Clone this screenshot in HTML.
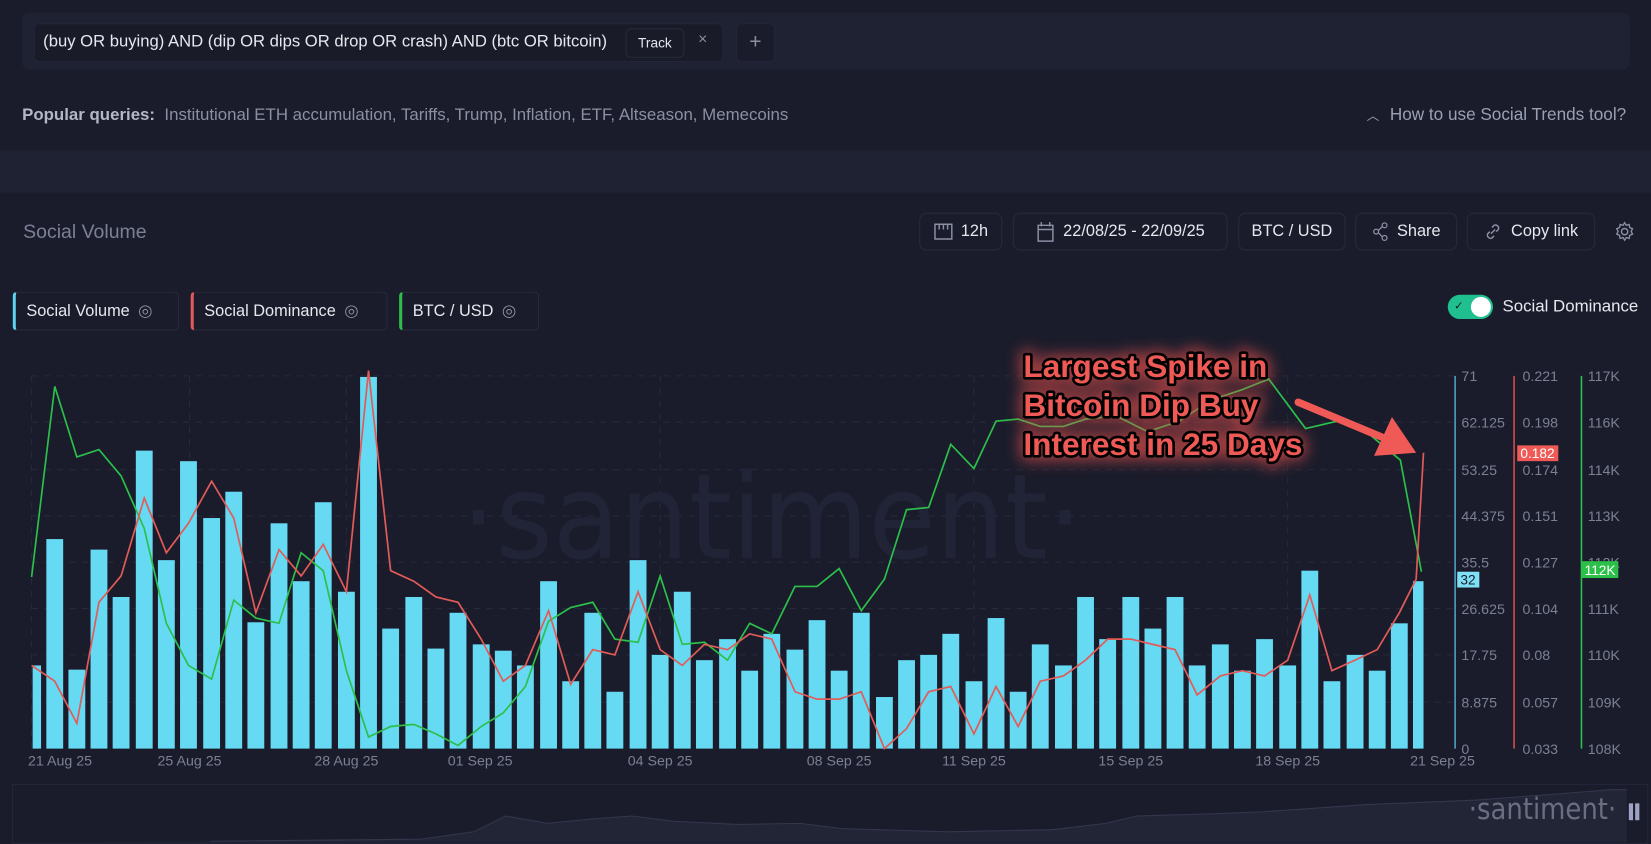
<!DOCTYPE html>
<html><head><meta charset="utf-8"><style>
html,body{margin:0;padding:0;background:#1a1c2b;overflow:hidden;width:1651px;height:844px}
#w{position:absolute;left:0;top:0;width:1568px;height:802px;transform:scale(1.0529);transform-origin:0 0;font-family:"Liberation Sans",sans-serif;color:#e2e4ec}
.a{position:absolute}
.btn{position:absolute;top:202px;height:36px;border:1px solid #262a3b;border-radius:7px;box-sizing:border-box;display:flex;align-items:center;justify-content:center;font-size:15.5px;color:#e6e8ef;gap:8px}
.leg{position:absolute;top:277px;height:37px;border:1px solid #262a3b;border-radius:4px;box-sizing:border-box;display:flex;align-items:center;padding-left:10px;font-size:15.5px;color:#e6e8ef;gap:8px}
</style></head><body><div id="w">
<div class="a" style="left:21px;top:12px;width:1527px;height:54px;background:#1f2233;border-radius:7px"></div>
<div class="a" style="left:32px;top:22px;width:655px;height:37px;background:#191b29;border:1px solid #23263a;border-radius:5px;box-sizing:border-box"></div>
<div class="a" style="left:41px;top:31px;font-size:15.8px;color:#e6e8ef;white-space:nowrap">(buy OR buying) AND (dip OR dips OR drop OR crash) AND (btc OR bitcoin)</div>
<div class="a" style="left:594px;top:27px;width:56px;height:28px;border:1px solid #262a3b;border-radius:5px;box-sizing:border-box;font-size:13px;text-align:center;line-height:26px;color:#e6e8ef">Track</div>
<div class="a" style="left:663px;top:29px;font-size:15px;color:#8a8fa3">×</div>
<div class="a" style="left:699px;top:22px;width:37px;height:37px;background:#1a1c2b;border:1px solid #23263a;border-radius:5px;box-sizing:border-box;text-align:center;line-height:34px;font-size:20px;color:#8a8fa3">+</div>
<div class="a" style="left:21px;top:101px;font-size:16px;color:#8a8fa3;white-space:nowrap"><b style="color:#b3b7c6">Popular queries:</b>&nbsp; Institutional ETH accumulation, Tariffs, Trump, Inflation, ETF, Altseason, Memecoins</div>
<div class="a" style="left:1298px;top:100px;font-size:16.3px;color:#9aa0b4;white-space:nowrap"><span style="font-size:12px;margin-right:10px">︿</span>How to use Social Trends tool?</div>
<div class="a" style="left:0;top:143px;width:1568px;height:40px;background:#1f2233"></div>
<div class="a" style="left:22px;top:209px;font-size:18.5px;color:#7b8095">Social Volume</div>
<div class="btn" style="left:873px;width:79px"><svg width="18" height="16"><path d="M1 1h16v14h-16zM5 1v5M9 1v5M13 1v5" fill="none" stroke="#8a8fa3" stroke-width="1.4"/></svg>12h</div>
<div class="btn" style="left:962px;width:204px"><svg width="18" height="20"><path d="M2 4h14v15h-14zM2 8h14M5 1v4M13 1v4" fill="none" stroke="#8a8fa3" stroke-width="1.4"/></svg>22/08/25 - 22/09/25</div>
<div class="btn" style="left:1176px;width:102px">BTC / USD</div>
<div class="btn" style="left:1287px;width:97px"><svg width="16" height="18"><circle cx="12" cy="3" r="2.3" fill="none" stroke="#8a8fa3" stroke-width="1.2"/><circle cx="4" cy="9" r="2.3" fill="none" stroke="#8a8fa3" stroke-width="1.2"/><circle cx="12" cy="15" r="2.3" fill="none" stroke="#8a8fa3" stroke-width="1.2"/><path d="M6 8l4-4M6 10l4 4" stroke="#8a8fa3" stroke-width="1.2"/></svg>Share</div>
<div class="btn" style="left:1393px;width:122px"><svg width="18" height="18"><path d="M7 11l4-4M8 5l2-2a3 3 0 014 4l-2 2M10 13l-2 2a3 3 0 01-4-4l2-2" fill="none" stroke="#8a8fa3" stroke-width="1.4"/></svg>Copy link</div>
<svg class="a" style="left:1533px;top:210px" width="20" height="20"><circle cx="10" cy="10" r="3" fill="none" stroke="#8a8fa3" stroke-width="1.4"/><path d="M10 1.5l1.5 2.5 2.8-.8.5 2.9 2.7 1.1-1.3 2.6 1.3 2.6-2.7 1.1-.5 2.9-2.8-.8-1.5 2.5-1.5-2.5-2.8.8-.5-2.9-2.7-1.1 1.3-2.6-1.3-2.6 2.7-1.1.5-2.9 2.8.8z" fill="none" stroke="#8a8fa3" stroke-width="1.3"/></svg>
<div class="leg" style="left:12px;width:158px;border-left:3px solid #5fd3f0">Social Volume <span style="color:#8a8fa3">◎</span></div>
<div class="leg" style="left:181px;width:187px;border-left:3px solid #e35b58">Social Dominance <span style="color:#8a8fa3">◎</span></div>
<div class="leg" style="left:379px;width:133px;border-left:3px solid #2cc04b">BTC / USD <span style="color:#8a8fa3">◎</span></div>
<div class="a" style="left:1375px;top:280px;width:43px;height:23px;background:#1fbf8f;border-radius:12px"><div class="a" style="left:22px;top:2px;width:19px;height:19px;background:#fff;border-radius:50%"></div><div class="a" style="left:6px;top:4px;font-size:11px;color:#13202a">✓</div></div>
<div class="a" style="left:1427px;top:283px;font-size:16px;color:#e6e8ef">Social Dominance</div>

<svg class="a" style="left:0;top:0" width="1568" height="802">
<defs><filter id="gl" x="-20%" y="-40%" width="140%" height="180%"><feGaussianBlur stdDeviation="7"/></filter></defs>
<g stroke="#262a3b" stroke-dasharray="6 6" stroke-width="1">
<path d="M30 357H1380M30 401H1380M30 446H1380M30 490H1380M30 534H1380M30 578H1380M30 622H1380M30 667H1380"/>
<path d="M30 357V711M180 357V711M329 357V711M627 357V711M925 357V711M1223 357V711"/>
</g>
<text x="733" y="530" font-size="112" fill="#212436" text-anchor="middle" font-family="DejaVu Sans" font-weight="normal" textLength="590" lengthAdjust="spacingAndGlyphs">·santiment·</text>
<g fill="#66d9f3">
<rect x="31" y="632" width="8" height="79"/><rect x="44" y="512" width="16" height="199"/><rect x="65" y="636" width="16" height="75"/><rect x="86" y="522" width="16" height="189"/><rect x="107" y="567" width="16" height="144"/><rect x="129" y="428" width="16" height="283"/><rect x="150" y="532" width="16" height="179"/><rect x="171" y="438" width="16" height="273"/><rect x="193" y="492" width="16" height="219"/><rect x="214" y="467" width="16" height="244"/><rect x="235" y="591" width="16" height="120"/><rect x="257" y="497" width="16" height="214"/><rect x="278" y="552" width="16" height="159"/><rect x="299" y="477" width="16" height="234"/><rect x="321" y="562" width="16" height="149"/><rect x="342" y="358" width="16" height="353"/><rect x="363" y="597" width="16" height="114"/><rect x="385" y="567" width="16" height="144"/><rect x="406" y="616" width="16" height="95"/><rect x="427" y="582" width="16" height="129"/><rect x="449" y="612" width="16" height="99"/><rect x="470" y="618" width="16" height="93"/><rect x="491" y="632" width="16" height="79"/><rect x="513" y="552" width="16" height="159"/><rect x="534" y="647" width="16" height="64"/><rect x="555" y="582" width="16" height="129"/><rect x="576" y="657" width="16" height="54"/><rect x="598" y="532" width="16" height="179"/><rect x="619" y="622" width="16" height="89"/><rect x="640" y="562" width="16" height="149"/><rect x="661" y="627" width="16" height="84"/><rect x="683" y="607" width="16" height="104"/><rect x="704" y="637" width="16" height="74"/><rect x="725" y="602" width="16" height="109"/><rect x="747" y="617" width="16" height="94"/><rect x="768" y="589" width="16" height="122"/><rect x="789" y="637" width="16" height="74"/><rect x="810" y="582" width="16" height="129"/><rect x="832" y="662" width="16" height="49"/><rect x="853" y="627" width="16" height="84"/><rect x="874" y="622" width="16" height="89"/><rect x="895" y="602" width="16" height="109"/><rect x="917" y="647" width="16" height="64"/><rect x="938" y="587" width="16" height="124"/><rect x="959" y="657" width="16" height="54"/><rect x="980" y="612" width="16" height="99"/><rect x="1002" y="632" width="16" height="79"/><rect x="1023" y="567" width="16" height="144"/><rect x="1044" y="607" width="16" height="104"/><rect x="1066" y="567" width="16" height="144"/><rect x="1087" y="597" width="16" height="114"/><rect x="1108" y="567" width="16" height="144"/><rect x="1129" y="632" width="16" height="79"/><rect x="1151" y="612" width="16" height="99"/><rect x="1172" y="637" width="16" height="74"/><rect x="1193" y="607" width="16" height="104"/><rect x="1215" y="632" width="16" height="79"/><rect x="1236" y="542" width="16" height="169"/><rect x="1257" y="647" width="16" height="64"/><rect x="1279" y="622" width="16" height="89"/><rect x="1300" y="637" width="16" height="74"/><rect x="1321" y="592" width="16" height="119"/><rect x="1342" y="552" width="10" height="159"/>
</g>
<polyline fill="none" stroke="#2cc04b" stroke-width="1.6" points="30,548 52,367 73,434 94,427 115,452 137,502 158,592 179,632 201,645 222,570 243,587 265,592 286,525 307,542 329,637 350,700 371,690 393,688 414,697 435,708 457,690 478,677 499,652 521,590 542,577 563,572 584,607 606,610 627,547 648,612 669,610 691,627 712,592 733,602 755,557 776,557 797,540 818,580 840,550 861,484 882,482 903,422 925,445 946,400 967,398 988,405 1010,405 1031,398 1060,395 1090,410 1120,400 1150,380 1180,370 1205,360 1240,407 1270,400 1300,412 1330,437 1350,543"/>
<polyline fill="none" stroke="#e35b58" stroke-width="1.6" points="30,632 52,647 73,687 94,572 115,547 137,473 158,525 179,497 201,457 222,492 243,582 265,522 286,547 307,517 329,562 350,352 371,542 393,552 414,567 435,572 457,607 478,647 499,632 521,580 542,650 563,617 584,622 606,562 627,617 648,632 669,612 691,617 712,602 733,607 755,657 776,664 797,664 818,657 840,711 861,692 882,657 903,652 925,697 946,652 967,690 988,647 1010,642 1031,627 1052,607 1074,607 1095,612 1116,617 1137,660 1159,642 1180,637 1201,642 1223,627 1244,565 1265,637 1287,627 1308,617 1329,582 1345,550 1352,430"/>
<g font-family="Liberation Sans" font-weight="bold" font-size="30" fill="#e3504c" stroke="#e3504c" stroke-width="10" filter="url(#gl)" opacity="0.7">
<text x="972" y="358">Largest Spike in</text><text x="972" y="395">Bitcoin Dip Buy</text><text x="972" y="432">Interest in 25 Days</text></g>
<g font-family="Liberation Sans" font-weight="bold" font-size="30" fill="#f05a56" stroke="#000" stroke-width="5" paint-order="stroke" stroke-linejoin="round">
<text x="972" y="358">Largest Spike in</text><text x="972" y="395">Bitcoin Dip Buy</text><text x="972" y="432">Interest in 25 Days</text></g>
<path d="M1233 382L1312 415" stroke="#f05a56" stroke-width="7" stroke-linecap="round"/>
<path d="M1345 430L1322 396L1305 433Z" fill="#f05a56"/>
<path d="M1382 357V711" stroke="#4fa3bf" stroke-width="1.5"/>
<path d="M1438 357V711" stroke="#d0504c" stroke-width="1.5"/>
<path d="M1502 357V711" stroke="#2cc04b" stroke-width="1.5"/>
<g font-family="Liberation Sans" font-size="13.5" fill="#7b8095">
<text x="1388" y="362">71</text><text x="1388" y="406">62.125</text><text x="1388" y="451">53.25</text><text x="1388" y="495">44.375</text><text x="1388" y="539">35.5</text><text x="1388" y="583">26.625</text><text x="1388" y="627">17.75</text><text x="1388" y="672">8.875</text><text x="1388" y="716">0</text>
<text x="1446" y="362">0.221</text><text x="1446" y="406">0.198</text><text x="1446" y="451">0.174</text><text x="1446" y="495">0.151</text><text x="1446" y="539">0.127</text><text x="1446" y="583">0.104</text><text x="1446" y="627">0.08</text><text x="1446" y="672">0.057</text><text x="1446" y="716">0.033</text>
<text x="1508" y="362">117K</text><text x="1508" y="406">116K</text><text x="1508" y="451">114K</text><text x="1508" y="495">113K</text><text x="1508" y="539">112K</text><text x="1508" y="583">111K</text><text x="1508" y="627">110K</text><text x="1508" y="672">109K</text><text x="1508" y="716">108K</text>
<text x="57" y="727" text-anchor="middle">21 Aug 25</text><text x="180" y="727" text-anchor="middle">25 Aug 25</text><text x="329" y="727" text-anchor="middle">28 Aug 25</text><text x="456" y="727" text-anchor="middle">01 Sep 25</text><text x="627" y="727" text-anchor="middle">04 Sep 25</text><text x="797" y="727" text-anchor="middle">08 Sep 25</text><text x="925" y="727" text-anchor="middle">11 Sep 25</text><text x="1074" y="727" text-anchor="middle">15 Sep 25</text><text x="1223" y="727" text-anchor="middle">18 Sep 25</text><text x="1370" y="727" text-anchor="middle">21 Sep 25</text>
</g>
<rect x="1384" y="543" width="21" height="15" fill="#7ee0f5"/><text x="1387" y="555" font-family="Liberation Sans" font-size="13" fill="#1a1c2b">32</text>
<rect x="1441" y="423" width="39" height="15" fill="#f05a56"/><text x="1444" y="435" font-family="Liberation Sans" font-size="13" fill="#fff">0.182</text>
<rect x="1502" y="533" width="35" height="16" fill="#2cc04b"/><text x="1505" y="546" font-family="Liberation Sans" font-size="13" fill="#fff">112K</text>
<rect x="12" y="745" width="1553" height="56" fill="none" stroke="#23263a"/>
<path d="M12 800L200 799L400 797L450 790L480 775L520 782L560 778L600 775L640 780L700 783L760 782L800 787L900 790L1000 788L1050 782L1080 775L1150 773L1200 771L1300 764L1400 760L1480 754L1530 750L1545 750L1545 800Z" fill="#222536"/>
<path d="M200 799L400 797L450 790L480 775L520 782L560 778L600 775L640 780L700 783L760 782L800 787L900 790L1000 788L1050 782L1080 775L1150 773L1200 771L1300 764L1400 760L1480 754L1530 750L1545 750" fill="none" stroke="#33374c"/>
<text x="1465" y="778" text-anchor="middle" font-family="DejaVu Sans" font-size="28" fill="#6a6e82" textLength="140" lengthAdjust="spacingAndGlyphs">·santiment·</text>
<rect x="1547" y="763" width="4" height="16" fill="#9ea2c4"/><rect x="1553" y="763" width="4" height="16" fill="#9ea2c4"/>
</svg>
</div></body></html>
